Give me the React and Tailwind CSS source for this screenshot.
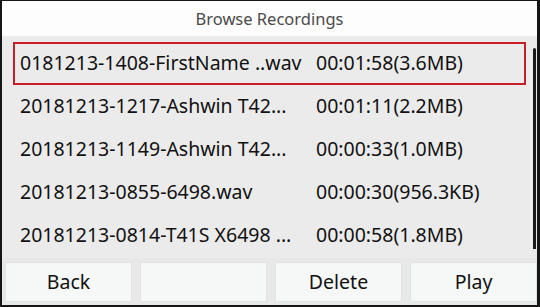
const ROWS = [
  { name: '0181213-1408-FirstName ..wav', info: '00:01:58(3.6MB)' },
  { name: '20181213-1217-Ashwin T42...', info: '00:01:11(2.2MB)' },
  { name: '20181213-1149-Ashwin T42...', info: '00:00:33(1.0MB)' },
  { name: '20181213-0855-6498.wav', info: '00:00:30(956.3KB)' },
  { name: '20181213-0814-T41S X6498 ...', info: '00:00:58(1.8MB)' },
]

const BUTTONS = ['Back', '', 'Delete', 'Play']

export default function App() {
  return (
    <div
      className="w-[540px] h-[307px] bg-[#151515] pt-px pl-[2px] pr-[3px] pb-[2px] flex flex-col overflow-hidden"
      style={{ fontFamily: '"Noto Sans", "Open Sans", sans-serif' }}
    >
      {/* Title */}
      <div className="h-[35px] shrink-0 bg-[#fdfdfd] flex items-center justify-center pt-[2px] text-[16.5px] text-[#4a4a4a]">
        Browse Recordings
      </div>

      {/* List */}
      <div className="relative flex-1 bg-[#ecebeb] pl-[11px] pr-[9px] pt-[6px]">
        {ROWS.map((r, i) => (
          <div
            key={i}
            className={`h-[43px] w-[513px] flex items-center pl-[5px] pb-[2px] text-[19.5px] text-[#111] border-2 ${
              i === 0 ? 'border-[#c81e28]' : 'border-transparent'
            }`}
          >
            <span className="w-[296px] shrink-0 whitespace-nowrap">{r.name}</span>
            <span className="whitespace-nowrap">{r.info}</span>
          </div>
        ))}
        {/* scrollbar */}
        <div className="absolute right-[1px] top-[12px] h-[201px] w-[3px] rounded-t-full bg-[#1a1a1a]" />
      </div>

      {/* Softkeys */}
      <div className="h-[47px] shrink-0 bg-[#e8e8e8] flex gap-[8px] pl-[3px] pr-0 pt-[4px] pb-[3px]">
        {BUTTONS.map((b, i) => (
          <div
            key={i}
            className="flex-1 bg-[#f6f8f7] border border-[#e2e4e3] flex items-center justify-center text-[19.5px] text-[#111]"
          >
            {b}
          </div>
        ))}
      </div>
    </div>
  )
}
